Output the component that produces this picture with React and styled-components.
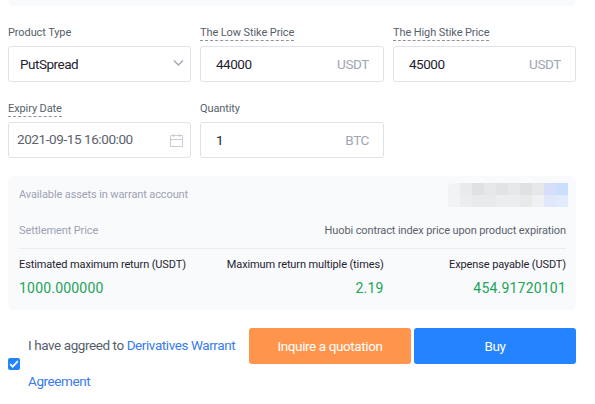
import React from 'react'
import styled, { createGlobalStyle } from 'styled-components'

const GlobalStyle = createGlobalStyle`
    * {
        box-sizing: border-box;
    }
    body {
        margin: 0;
        background: #fff;
        font-family: Roboto, "Liberation Sans", sans-serif;
        overflow: hidden;
    }
`

const mosaic = [
    ['#f1f2f4', '#e8eaec', '#dfe1e4', '#e5e7e9', '#e1e3e5', '#e6e8ea', '#dfe1e4', '#e5e7e9', '#d6defa', '#cadffb'],
    ['#f1f3f5', '#ebedef', '#e8eaec', '#e8eaec', '#ebedef', '#ebedef', '#e7e9eb', '#eff1f4', '#dfe7fb', '#e2ebfb'],
]

const ChevronIcon = () => (
    <svg width="11" height="10" viewBox="0 0 11 10" fill="none" stroke="#a3a8b5" strokeWidth="1.5">
        <path d="M0.9 1.5 L5.4 6 L9.9 1.5" />
    </svg>
)

const CalendarIcon = () => (
    <svg width="14" height="14" viewBox="0 0 14 14" fill="none" stroke="#c9ccd4">
        <path d="M0.5 2.5 H12.5 V13.5 H0.5 Z M0.5 6.5 H12.5" />
        <path d="M3.5 1 V4 M9.5 1 V4" />
    </svg>
)

const CheckIcon = () => (
    <svg width="12" height="12" viewBox="0 0 12 12" fill="none" stroke="#fff" strokeWidth="1.7">
        <path d="M2.2 6.2 L4.7 8.7 L9.8 3.2" />
    </svg>
)

const Field = ({ label, dashed, value, unit, icon, muted, indent }) => (
    <FieldBox>
        <Label $dashed={dashed}>{label}</Label>
        <Control $indent={indent}>
            <Value $muted={muted}>{value}</Value>
            {unit ? <Unit>{unit}</Unit> : null}
            {icon}
        </Control>
    </FieldBox>
)

export default function App() {
    return (
        <>
            <GlobalStyle />
            <Page>
                <PanelEnd />
                <Fields>
                    <Field label="Product Type" value="PutSpread" indent={11} icon={<ChevronIcon />} />
                    <Field label="The Low Stike Price" dashed value="44000" unit="USDT" indent={15} />
                    <Field label="The High Stike Price" dashed value="45000" unit="USDT" indent={15} />
                    <Field label="Expiry Date" dashed muted value="2021-09-15 16:00:00" indent={8} icon={<CalendarIcon />} />
                    <Field label="Quantity" value="1" unit="BTC" indent={15} />
                </Fields>
                <Summary>
                    <Row>
                        <Name>Available assets in warrant account</Name>
                        <Mosaic>
                            {mosaic.flat().map((color, i) => <Cell key={i} $color={color} />)}
                        </Mosaic>
                    </Row>
                    <Row>
                        <Name>Settlement Price</Name>
                        <Detail>Huobi contract index price upon product expiration</Detail>
                    </Row>
                    <Results>
                        <Result>
                            <ResultName>Estimated maximum return (USDT)</ResultName>
                            <Amount>1000.000000</Amount>
                        </Result>
                        <Result>
                            <ResultName>Maximum return multiple (times)</ResultName>
                            <Amount>2.19</Amount>
                        </Result>
                        <Result>
                            <ResultName>Expense payable (USDT)</ResultName>
                            <Amount>454.91720101</Amount>
                        </Result>
                    </Results>
                </Summary>
                <Footer>
                    <Checkbox><CheckIcon /></Checkbox>
                    <Agreement>
                        I have aggreed to <Terms href="#">Derivatives Warrant</Terms> <Terms href="#">Agreement</Terms>
                    </Agreement>
                    <Button $color="#ff954c">Inquire a quotation</Button>
                    <Button $color="#2483ff">Buy</Button>
                </Footer>
            </Page>
        </>
    )
}

const Page = styled.div`
    width: 595px;
    height: 404px;
    padding: 0 19px 0 8px;
`
const PanelEnd = styled.div`
    height: 6px;
    background: #f9fafc;
    border-radius: 0 0 6px 6px;
`
const Fields = styled.div`
    display: grid;
    grid-template-columns: 183px 184px 183px;
    column-gap: 9px;
    row-gap: 18px;
    padding-top: 18px;
`
const FieldBox = styled.div`
    display: flex;
    flex-direction: column;
    align-items: flex-start;
    height: 58px;
`
const Label = styled.div`
    height: 17px;
    margin-bottom: 5px;
    line-height: 17px;
    font-size: 11px;
    letter-spacing: -0.1px;
    color: #565f6b;
    white-space: nowrap;
    border-bottom: ${props => props.$dashed ? '1px dashed #8c929e' : 'none'};
`
const Control = styled.div`
    display: flex;
    align-items: center;
    width: 100%;
    height: 36px;
    padding: 0 6px 0 ${props => props.$indent}px;
    border: 1px solid #dfe2e7;
    border-radius: 3px;
    svg {
        flex: none;
    }
`
const Value = styled.div`
    flex: 1;
    padding-bottom: ${props => props.$muted ? '2px' : '0'};
    font-size: 13.5px;
    letter-spacing: ${props => props.$muted ? '-0.41px' : '-0.48px'};
    color: ${props => props.$muted ? '#5b626d' : '#1f2330'};
    white-space: nowrap;
`
const Unit = styled.div`
    margin-right: 8px;
    font-size: 13.5px;
    letter-spacing: -0.4px;
    color: #a0a5b5;
`
const Summary = styled.div`
    height: 134px;
    margin-top: 18px;
    padding: 0 10px 0 11px;
    background: #f9fafc;
    border-radius: 6px;
`
const Row = styled.div`
    display: flex;
    justify-content: space-between;
    align-items: center;
    height: 36px;
    font-size: 11px;
    letter-spacing: -0.11px;
`
const Name = styled.div`
    color: #9ca2b3;
`
const Detail = styled.div`
    color: #5b626d;
`
const Mosaic = styled.div`
    display: grid;
    grid-template-columns: repeat(10, 12px);
    grid-auto-rows: 12px;
    margin: 2px -2px 0 0;
    border-top-left-radius: 10px 3px;
    overflow: hidden;
`
const Cell = styled.div`
    background: ${props => props.$color};
`
const Results = styled.div`
    display: grid;
    grid-template-columns: repeat(3, 1fr);
    border-top: 1px solid #eaecf0;
`
const Result = styled.div`
    padding-top: 8px;
    text-align: right;
    white-space: nowrap;
    &:first-child {
        text-align: left;
    }
`
const ResultName = styled.div`
    height: 15px;
    line-height: 15px;
    font-size: 11px;
    letter-spacing: -0.12px;
    color: #1f2330;
`
const Amount = styled.div`
    margin-top: 8px;
    line-height: 16px;
    font-size: 14px;
    letter-spacing: 0.2px;
    color: #21a35b;
`
const Footer = styled.div`
    display: flex;
    align-items: flex-start;
    padding-top: 18px;
`
const Checkbox = styled.div`
    width: 12px;
    height: 12px;
    margin: 30px 8px 0 0;
    background: #2483ff;
    border-radius: 2px;
    svg {
        display: block;
    }
`
const Agreement = styled.div`
    width: 221px;
    margin-top: -1px;
    line-height: 36px;
    font-size: 13.5px;
    letter-spacing: -0.42px;
    color: #565f6b;
`
const Terms = styled.a`
    color: #387bec;
    text-decoration: none;
`
const Button = styled.button`
    width: 162px;
    height: 36px;
    padding: 0;
    border: 0;
    border-radius: 3px;
    background: ${props => props.$color};
    color: #fff;
    font-family: inherit;
    font-size: 13.5px;
    letter-spacing: -0.4px;
    & + & {
        margin-left: 3px;
    }
`
